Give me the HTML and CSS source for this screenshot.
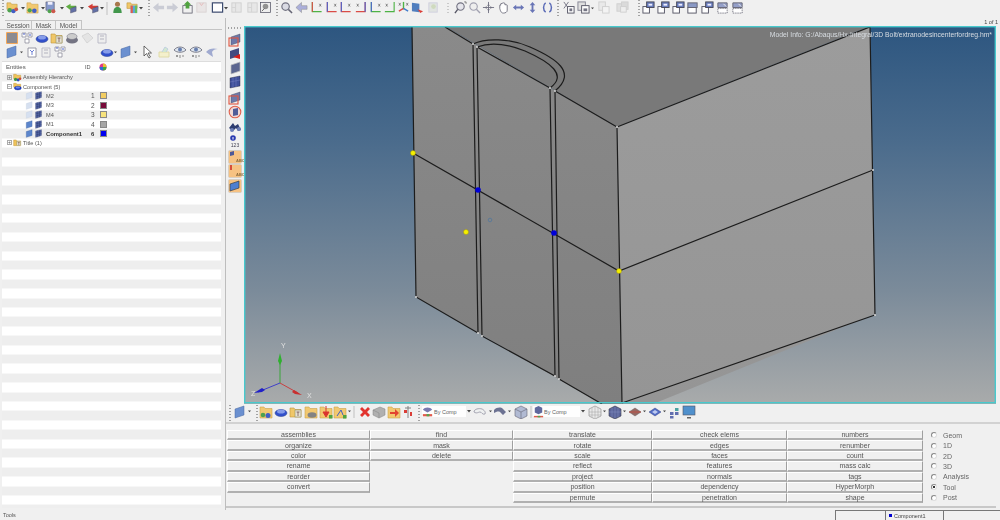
FILE: index.html
```html
<!DOCTYPE html>
<html lang="en">
<head>
<meta charset="utf-8">
<title>HyperMesh</title>
<link rel="stylesheet" href="styles.css">
</head>
<body>
<svg class="sprites" width="0" height="0" aria-hidden="true">
  <defs>
    <symbol id="dd" viewBox="0 0 4 3"><path d="M0 0h4L2 2.5z" fill="#333"/></symbol>
    <symbol id="dots" viewBox="0 0 2 16"><path d="M1 0v16" stroke="#444" stroke-width="1" stroke-dasharray="1 2"/></symbol>
    <symbol id="asm" viewBox="0 0 14 14"><path d="M1 2h4l1 1.500h6V9H1z" fill="#f0c35a" stroke="#b88a2a" stroke-width=".6"/><circle cx="4" cy="10" r="2.500" fill="#3d9a3d"/><circle cx="8" cy="11" r="2.300" fill="#2f4fc0"/><circle cx="11" cy="9" r="2" fill="#c9483a"/></symbol>
    <symbol id="compf" viewBox="0 0 14 14"><path d="M1 2h4l1 1.500h6V8H1z" fill="#f0c35a" stroke="#b88a2a" stroke-width=".6"/><ellipse cx="7.500" cy="9.500" rx="5.500" ry="3" fill="#1f3fc8" stroke="#122a80" stroke-width=".5"/><ellipse cx="7.500" cy="8.500" rx="3.500" ry="1.600" fill="#6d88e8"/></symbol>
    <symbol id="titlef" viewBox="0 0 14 14"><path d="M1 3h4l1 1.500h6V12H1z" fill="#f0c35a" stroke="#b88a2a" stroke-width=".6"/><rect x="6" y="5" width="6" height="7" fill="#e6e0d0" stroke="#885" stroke-width=".6"/><path d="M7.500 7h3M9 7v4" stroke="#644" stroke-width=".8"/></symbol>
    <symbol id="save" viewBox="0 0 14 14"><path d="M1 1h9v9H1z" fill="#7a8fc8" stroke="#445" stroke-width=".6"/><path d="M3 1h5v3H3z" fill="#eef"/><circle cx="5" cy="11" r="2.200" fill="#3d9a3d"/><circle cx="9" cy="11" r="2.200" fill="#c9483a"/></symbol>
    <symbol id="garrow" viewBox="0 0 14 14"><path d="M1 6l5-3v2h6v3H6v2z" fill="#4fa52f"/><path d="M6 8l6-2v5l-6 2z" fill="#54629e" stroke="#334" stroke-width=".4"/></symbol>
    <symbol id="rarrow" viewBox="0 0 14 14"><path d="M1 6l5-3v2h6v3H6v2z" fill="#d02a22"/><path d="M6 8l6-2v5l-6 2z" fill="#54629e" stroke="#334" stroke-width=".4"/></symbol>
    <symbol id="person" viewBox="0 0 14 14"><circle cx="7" cy="3.500" r="2.700" fill="#a06a3a"/><path d="M2.500 13c0-5 2-6.500 4.500-6.500S11.500 8 11.500 13z" fill="#2f8d3a"/></symbol>
    <symbol id="rainbow" viewBox="0 0 14 14"><path d="M1 2h4l1 1.500h6V8H1z" fill="#f0c35a" stroke="#b88a2a" stroke-width=".6"/><path d="M5 5h7v8H5z" fill="#4aa0d8"/><path d="M5 5h2.300v8H5z" fill="#e04a3a"/><path d="M9.600 5H12v8H9.600z" fill="#58b84a"/></symbol>
    <symbol id="gleft" viewBox="0 0 14 14"><path d="M1 7l6-5v3h6v4H7v3z" fill="#c6c8d2"/></symbol>
    <symbol id="gright" viewBox="0 0 14 14"><path d="M13 7L7 2v3H1v4h6v3z" fill="#c6c8d2"/></symbol>
    <symbol id="mleft" viewBox="0 0 14 14"><path d="M1 7l6-5.500v3.500h6v4H7v3.500z" fill="#a4a8d8" stroke="#777" stroke-width=".5"/></symbol>
    <symbol id="gup" viewBox="0 0 14 14"><rect x="2" y="5" width="10" height="8" fill="#f0f0f0" stroke="#445" stroke-width=".8"/><path d="M7 0l4 4H9v4H5V4H3z" fill="#3f9b2c"/></symbol>
    <symbol id="fade" viewBox="0 0 14 14"><rect x="2" y="2" width="10" height="10" fill="#e6e6e6" stroke="#ccc"/><path d="M6 2v10M2 7h4" stroke="#d0d0d0"/></symbol>
    <symbol id="fadr" viewBox="0 0 14 14"><rect x="2" y="2" width="10" height="10" fill="#e8e4e4" stroke="#d8d0d0"/><path d="M5 2l2 3 2-3" stroke="#e3b5b5" fill="none"/></symbol>
    <symbol id="sq" viewBox="0 0 14 14"><rect x="1.500" y="2" width="11" height="10" fill="#fff" stroke="#2a3a62" stroke-width="1.300"/></symbol>
    <symbol id="gear" viewBox="0 0 14 14"><rect x="1.500" y="1.500" width="11" height="11" fill="#eee" stroke="#445" stroke-width=".8"/><circle cx="7" cy="6" r="3" fill="#888"/><path d="M3 11l3-3" stroke="#555"/></symbol>
    <symbol id="mag" viewBox="0 0 14 14"><circle cx="6" cy="6" r="4" fill="#d7d9e3" stroke="#667" stroke-width="1.300"/><path d="M9 9l4 4" stroke="#556" stroke-width="1.600"/></symbol>
    <symbol id="axa" viewBox="0 0 14 14"><path d="M2.500 1v10.500h10" fill="none" stroke="#3cac32" stroke-width="1.200"/><path d="M2.500 1v10.500" stroke="#d83a34" stroke-width="1.200"/><path d="M10 3l2 3M12 3l-2 3" stroke="#333" stroke-width=".6"/></symbol>
    <symbol id="axb" viewBox="0 0 14 14"><path d="M2.500 1v10.500h10" fill="none" stroke="#d83a34" stroke-width="1.200"/><path d="M2.500 1v10.500" stroke="#3a54c8" stroke-width="1.200"/><path d="M10 3l2 3M12 3l-2 3" stroke="#333" stroke-width=".6"/></symbol>
    <symbol id="axc" viewBox="0 0 14 14"><path d="M12 1v10.500H2" fill="none" stroke="#d83a34" stroke-width="1.200"/><path d="M12 1v10.500" stroke="#3a54c8" stroke-width="1.200"/><path d="M3 3l2 3M5 3l-2 3" stroke="#333" stroke-width=".6"/></symbol>
    <symbol id="axd" viewBox="0 0 14 14"><path d="M2.500 1v10.500h10" fill="none" stroke="#3cac32" stroke-width="1.200"/><path d="M2.500 1v10.500" stroke="#3a54c8" stroke-width="1.200"/><path d="M10 3l2 3M12 3l-2 3" stroke="#333" stroke-width=".6"/></symbol>
    <symbol id="axe" viewBox="0 0 14 14"><path d="M12 1v10.500H2" fill="none" stroke="#3cac32" stroke-width="1.200"/><path d="M3 3l2 3M5 3l-2 3" stroke="#333" stroke-width=".6"/></symbol>
    <symbol id="tri" viewBox="0 0 14 14"><path d="M7 1v8" stroke="#3cac32" stroke-width="1.500"/><path d="M7 8L2 11" stroke="#d83a34" stroke-width="1.500"/><path d="M7 8l5 3" stroke="#2f6fc8" stroke-width="1.500"/><path d="M2 2l2 3M4 2L2 5M10 2l2 3M12 2l-2 3" stroke="#333" stroke-width=".6"/></symbol>
    <symbol id="view" viewBox="0 0 14 14"><path d="M1 2l8 1v9l-8-1z" fill="#3f72b8"/><path d="M7 9l6 2-3 2z" fill="#d82a22"/></symbol>
    <symbol id="fadb" viewBox="0 0 14 14"><rect x="2" y="2" width="9" height="10" fill="#dfe3df" stroke="#ccd"/><circle cx="7" cy="6" r="2.500" fill="#cbd8b8"/></symbol>
    <symbol id="zoom" viewBox="0 0 14 14"><circle cx="7" cy="6" r="4" fill="#e4e4ea" stroke="#667" stroke-width="1.200"/><path d="M4 9l-3 4" stroke="#445" stroke-width="1.500"/><path d="M11 1h2v2" stroke="#333" fill="none" stroke-width=".7"/></symbol>
    <symbol id="zoomf" viewBox="0 0 14 14"><circle cx="6" cy="6" r="4" fill="#eee" stroke="#99a" stroke-width="1.200"/><path d="M9 9l4 4" stroke="#99a" stroke-width="1.500"/></symbol>
    <symbol id="cross" viewBox="0 0 14 14"><path d="M7 1v12M1 7h12" stroke="#667" stroke-width="1"/><path d="M7 3l-1.500 2h3zM7 11l-1.500-2h3zM3 7l2-1.500v3zM11 7l-2-1.500v3z" fill="#667"/></symbol>
    <symbol id="hand" viewBox="0 0 14 14"><path d="M3 8V4.500l1 0V3l1.500-.5L7 2l1.500.5V4l1.500 0 1 .5V10c0 2-2 3-4 3S4 12 3 8z" fill="#fff" stroke="#556" stroke-width=".9"/></symbol>
    <symbol id="lr" viewBox="0 0 14 14"><path d="M1 7l3.500-3v2h5V4L13 7l-3.500 3V8h-5v2z" fill="#5a68b0"/></symbol>
    <symbol id="ud" viewBox="0 0 14 14"><path d="M7 1l3 3.500H8v5h2L7 13l-3-3.500h2v-5H4z" fill="#5a68b0"/></symbol>
    <symbol id="rot" viewBox="0 0 14 14"><path d="M5 2C2 4 2 10 5 12M9 2c3 2 3 8 0 10" fill="none" stroke="#4a5cb0" stroke-width="1.600"/></symbol>
    <symbol id="cut" viewBox="0 0 14 14"><path d="M2 1l5 7M7 1L2 8" stroke="#667" stroke-width="1"/><rect x="6" y="6" width="7" height="7" fill="#fff" stroke="#445"/><rect x="8" y="8" width="3" height="3" fill="#667"/></symbol>
    <symbol id="copy" viewBox="0 0 14 14"><rect x="1" y="1" width="8" height="9" fill="#ddd" stroke="#778"/><rect x="5" y="5" width="8" height="8" fill="#fff" stroke="#445"/><rect x="7" y="8" width="4" height="3" fill="#667"/></symbol>
    <symbol id="copyf" viewBox="0 0 14 14"><rect x="2" y="1" width="7" height="9" fill="#e8e8e8" stroke="#ccc"/><rect x="6" y="6" width="7" height="7" fill="#f3f3f3" stroke="#ccc"/></symbol>
    <symbol id="copyg" viewBox="0 0 14 14"><rect x="1" y="3" width="7" height="8" fill="#ddd" stroke="#ccc"/><rect x="6" y="1" width="7" height="8" fill="#d8d8d8" stroke="#ccc"/><rect x="5" y="6" width="6" height="6" fill="#eee" stroke="#ccc"/></symbol>
    <symbol id="win" viewBox="0 0 14 14"><rect x="1" y="6" width="7" height="7" fill="#fff" stroke="#445"/><rect x="5" y="1" width="8" height="6" fill="#5a70b8" stroke="#334"/><rect x="7" y="3" width="4" height="2" fill="#eef"/></symbol>
    <symbol id="wing" viewBox="0 0 14 14"><rect x="2" y="7" width="9" height="6" fill="#fff" stroke="#445"/><rect x="2" y="2" width="10" height="5" fill="#7f8fc0" stroke="#556"/></symbol>
    <symbol id="wint" viewBox="0 0 14 14"><rect x="2" y="8" width="10" height="5" fill="#fff" stroke="#445" stroke-dasharray="1 1"/><path d="M2 2h10v5H2z" fill="#8a96c4" stroke="#556"/><path d="M8 3l3 3" stroke="#eee"/></symbol>
    <symbol id="shade" viewBox="0 0 14 14"><rect x="1" y="1" width="12" height="12" fill="#f5a04a" rx="1"/><rect x="2" y="2" width="10" height="10" fill="#808088"/></symbol>
    <symbol id="mesh" viewBox="0 0 14 14"><path d="M1 3l9-2v9l-9 3z" fill="#5668a8" stroke="#2a3566" stroke-width=".5"/><path d="M4 2.500v10M7 1.800v9.600M1 6l9-2M1 9.500l9-2.500" stroke="#22305c" stroke-width=".5"/></symbol>
    <symbol id="plane" viewBox="0 0 14 14"><path d="M2 4l9-3v9l-9 3z" fill="#5c86cc" stroke="#3a5a98" stroke-width=".5"/></symbol>
    <symbol id="planef" viewBox="0 0 14 14"><path d="M2 4l9-3v9l-9 3z" fill="#d6e0f0" stroke="#c2cee0" stroke-width=".5"/></symbol>
    <symbol id="disc" viewBox="0 0 14 14"><ellipse cx="7" cy="8" rx="6" ry="3.500" fill="#1d3fc8" stroke="#102a80" stroke-width=".5"/><ellipse cx="7" cy="6.500" rx="4" ry="2" fill="#7a93e8"/></symbol>
    <symbol id="disk" viewBox="0 0 14 14"><ellipse cx="7" cy="9" rx="6" ry="3.500" fill="#667"/><ellipse cx="7" cy="5.500" rx="5" ry="3" fill="#c8c8c8" stroke="#667" stroke-width=".6"/></symbol>
    <symbol id="diskf" viewBox="0 0 14 14"><path d="M2 5l6-3 5 5-6 5z" fill="#e3e3e3" stroke="#d2d2d2"/></symbol>
    <symbol id="tree2" viewBox="0 0 14 14"><path d="M3 3h8v9H3z" fill="#fff" stroke="#778" stroke-width=".8"/><path d="M5 5l2 2M9 5l-2 2M7 7v3" stroke="#3a54c8" stroke-width=".8"/></symbol>
    <symbol id="tree3" viewBox="0 0 14 14"><path d="M3 3h8v9H3z" fill="#eee" stroke="#aab" stroke-width=".8"/><path d="M5 5h4M5 8h4" stroke="#99a" stroke-width=".8"/></symbol>
    <symbol id="tree4" viewBox="0 0 14 14"><path d="M2 2h4v4H2zM8 2h4v4H8zM5 8h4v4H5z" fill="#fff" stroke="#778" stroke-width=".7"/><path d="M3 3h2M9 4h2" stroke="#3a54c8"/></symbol>
    <symbol id="cursor" viewBox="0 0 14 14"><path d="M4 1v10l2.500-2.500L9 13l1.500-1L8 8h3.500z" fill="#fff" stroke="#333" stroke-width=".8"/></symbol>
    <symbol id="erase" viewBox="0 0 14 14"><path d="M2 7h10v5H2z" fill="#f4f0c8" stroke="#ddd8a0"/><path d="M5 7l3-5 3 2-2 3" fill="#cfe8cf" stroke="#bcd"/></symbol>
    <symbol id="eye" viewBox="0 0 14 14"><path d="M1 5c3-4 9-4 12 0-3 3-9 3-12 0z" fill="#dce4ee" stroke="#556" stroke-width=".8"/><circle cx="7" cy="4.500" r="2" fill="#5a74a8"/><path d="M3 11h2M4 10v2M7 10v3M9 11h2" stroke="#333" stroke-width=".6"/></symbol>
    <symbol id="undo" viewBox="0 0 14 14"><path d="M1 7c3-4 8-4 12-3-3 0-5 1-6 3l1 5-3-2z" fill="#97a2cc"/></symbol>
    <symbol id="redbox" viewBox="0 0 14 14"><path d="M3 4l9-3v8l-9 3z" fill="#6c78a8" stroke="#445" stroke-width=".4"/><rect x="1" y="5" width="9" height="8" fill="none" stroke="#e0553f" stroke-width="1.100"/></symbol>
    <symbol id="redarr" viewBox="0 0 14 14"><path d="M2 4l9-3v8l-9 3z" fill="#444a80"/><path d="M5 10l7-3v5z" fill="#d8201a"/></symbol>
    <symbol id="gplane" viewBox="0 0 14 14"><path d="M3 4l9-3v9l-9 3z" fill="#5c6690" stroke="#bbb" stroke-width=".7"/></symbol>
    <symbol id="bplane" viewBox="0 0 14 14"><path d="M2 3l10-2v10L2 13z" fill="#3f4f9a" stroke="#223" stroke-width=".4"/><path d="M5 2.500v10M8 2v10M2 7l10-2" stroke="#7480c0" stroke-width=".5"/></symbol>
    <symbol id="ring" viewBox="0 0 14 14"><circle cx="7" cy="7" r="5.800" fill="#f0d8d4" stroke="#e0604c" stroke-width="1.100"/><path d="M5 4l5-1v7l-5 1z" fill="#505c98"/></symbol>
    <symbol id="bino" viewBox="0 0 14 14"><path d="M1 8l4-5 2 3 3-2 3 6-3 1-2-3-3 3z" fill="#2c3c70"/><circle cx="4" cy="10" r="2" fill="#6e80b8"/><circle cx="11" cy="9" r="2" fill="#6e80b8"/></symbol>
    <symbol id="tanabc" viewBox="0 0 14 14"><rect x=".5" y=".5" width="13" height="13" rx="1" fill="#f6c283" stroke="#c9c9c9" stroke-width=".6"/><path d="M2 2l4-1v4l-4 1z" fill="#4c5898"/></symbol>
    <symbol id="tanred" viewBox="0 0 14 14"><rect x=".5" y=".5" width="13" height="13" rx="1" fill="#f6c283" stroke="#c9c9c9" stroke-width=".6"/><path d="M3 1v5" stroke="#c81e1e" stroke-width="1.400"/></symbol>
    <symbol id="tanpl" viewBox="0 0 14 14"><rect x=".5" y=".5" width="13" height="13" rx="1" fill="#f6c283" stroke="#c9c9c9" stroke-width=".6"/><path d="M2 5l9-3v7l-9 3z" fill="#4f7fd0" stroke="#333" stroke-width=".6"/></symbol>
    <symbol id="bfolder" viewBox="0 0 14 14"><path d="M1 2h4l1 1.500h7V13H1z" fill="#f2c462" stroke="#c89a3a" stroke-width=".6"/><circle cx="4" cy="10" r="2.300" fill="#3d9a3d"/><circle cx="9" cy="10.500" r="2.500" fill="#2f4fc0"/></symbol>
    <symbol id="bgear" viewBox="0 0 14 14"><path d="M1 2h4l1 1.500h7V13H1z" fill="#f2c462" stroke="#c89a3a" stroke-width=".6"/><ellipse cx="8" cy="10" rx="4.500" ry="2.800" fill="#777"/></symbol>
    <symbol id="bred" viewBox="0 0 14 14"><path d="M1 2h4l1 1.500h7V13H1z" fill="#f2c462" stroke="#c89a3a" stroke-width=".6"/><path d="M7 1v8M4 7l3 5 3-5z" fill="#d8201a" stroke="#d8201a"/><rect x="10" y="10" width="3.500" height="3.500" fill="#3f9b2c"/></symbol>
    <symbol id="byel" viewBox="0 0 14 14"><path d="M1 2h4l1 1.500h7V13H1z" fill="#f2c462" stroke="#c89a3a" stroke-width=".6"/><path d="M4 11l4-6 2 5" stroke="#2f4fc0" fill="none"/><rect x="10" y="10" width="3.500" height="3.500" fill="#3f9b2c"/></symbol>
    <symbol id="x" viewBox="0 0 14 14"><path d="M2 4l2-2 3 3 3-3 2 2-3 3 3 3-2 2-3-3-3 3-2-2 3-3z" fill="#e0201a"/></symbol>
    <symbol id="block" viewBox="0 0 14 14"><path d="M1 5l7-3 5 2v6l-6 3-6-3z" fill="#a9a9a9" stroke="#777" stroke-width=".5"/><path d="M1 5l6 3v5" stroke="#777" fill="none" stroke-width=".5"/></symbol>
    <symbol id="bredr" viewBox="0 0 14 14"><path d="M1 2h4l1 1.500h7V13H1z" fill="#f2c462" stroke="#c89a3a" stroke-width=".6"/><path d="M3 7h5V4l4 4-4 4V9H3z" fill="#e0301a"/></symbol>
    <symbol id="tool" viewBox="0 0 14 14"><path d="M7 1v12M4 3h6" stroke="#777"/><path d="M3 5h3v3H3z" fill="#d82a22"/><path d="M9 7h2v4H9z" fill="#d82a22"/></symbol>
    <symbol id="combo1" viewBox="0 0 14 14"><path d="M2 5c2-3 8-3 10 0l-5 3z" fill="#6c6ca8"/><path d="M2 11h10" stroke="#e04a3a" stroke-width="2.400"/><path d="M6 11h3" stroke="#3fa03f" stroke-width="2.400"/></symbol>
    <symbol id="loop" viewBox="0 0 14 14"><path d="M1 7c0-3 5-4 8-3 2 1 4 3 3 5-3 1-3-2-5-2-2 0-3 2-6 0z" fill="#eef0f0" stroke="#889" stroke-width=".8"/></symbol>
    <symbol id="wave" viewBox="0 0 14 14"><path d="M1 5c3-3 7-3 9-1l3 3-3 3-3-3C5 6 3 7 1 8z" fill="#5e6488"/></symbol>
    <symbol id="cube" viewBox="0 0 14 14"><path d="M1 4l6-3 6 3v7l-6 3-6-3z" fill="#aab4d0" stroke="#556" stroke-width=".6"/><path d="M1 4l6 3 6-3M7 7v7" stroke="#556" fill="none" stroke-width=".6"/></symbol>
    <symbol id="combo2" viewBox="0 0 14 14"><path d="M3 3l4-2 4 2v5l-4 2-4-2z" fill="#4f5994"/><path d="M2 12.500h10" stroke="#e04a3a" stroke-width="1.600"/><path d="M6 12.500h3" stroke="#3fa03f" stroke-width="1.600"/></symbol>
    <symbol id="meshc" viewBox="0 0 14 14"><path d="M1 4l6-3 6 3v7l-6 3-6-3z" fill="#e8e8e8" stroke="#888" stroke-width=".7"/><path d="M4 3v9M7 2v11M10 3v9M1 7l12 0M1 10h12" stroke="#999" stroke-width=".5"/></symbol>
    <symbol id="solid" viewBox="0 0 14 14"><path d="M1 4l6-3 6 3v7l-6 3-6-3z" fill="#4a5490" stroke="#223" stroke-width=".6"/><path d="M4 3v9M7 2v11M10 3v9M1 7h12" stroke="#7a84bc" stroke-width=".5"/></symbol>
    <symbol id="flat" viewBox="0 0 14 14"><path d="M1 7l6-4 6 4-6 4z" fill="#8c5a54" stroke="#555" stroke-width=".5"/><path d="M1 7h12" stroke="#c0392b" stroke-width=".8"/></symbol>
    <symbol id="dia" viewBox="0 0 14 14"><path d="M1 7l6-4 6 4-6 4z" fill="#3f5cc0" stroke="#24327a" stroke-width=".5"/><path d="M4 7l3-2 3 2-3 2z" fill="#b8c6f0"/></symbol>
    <symbol id="nodes" viewBox="0 0 14 14"><rect x="2" y="7" width="3.500" height="3" fill="#5060a8"/><rect x="2" y="11" width="3.500" height="2.500" fill="#5060a8"/><rect x="7" y="3" width="3.500" height="3" fill="#3a9a9a"/><rect x="7" y="7" width="3.500" height="3" fill="#5060a8"/></symbol>
    <symbol id="monitor" viewBox="0 0 14 14"><rect x="1" y="1" width="12" height="9" fill="#3f86c8" stroke="#445" stroke-width=".6"/><path d="M5 12h4v1.500H5z" fill="#555"/></symbol>
  </defs>
</svg>

<div class="app">
  <header class="topbar">
    <svg class="strip" width="1000" height="18" viewBox="0 0 1000 18" aria-hidden="true">
      <use href="#dots" x="2" y="0" width="2" height="16"/>
      <use href="#asm" x="6" y="1" width="13" height="13"/><use href="#dd" x="21" y="7" width="4" height="3"/>
      <use href="#bfolder" x="26" y="1" width="13" height="13"/><use href="#dd" x="41" y="7" width="4" height="3"/>
      <use href="#save" x="45" y="1" width="13" height="13"/><use href="#dd" x="60" y="7" width="4" height="3"/>
      <use href="#garrow" x="65" y="1" width="13" height="13"/><use href="#dd" x="80" y="7" width="4" height="3"/>
      <use href="#rarrow" x="87" y="1" width="13" height="13"/><use href="#dd" x="100" y="7" width="4" height="3"/>
      <path d="M107 2v13" stroke="#bbb"/>
      <use href="#person" x="111" y="1" width="13" height="13"/>
      <use href="#rainbow" x="126" y="1" width="13" height="13"/><use href="#dd" x="139" y="7" width="4" height="3"/>
      <use href="#dots" x="148" y="0" width="2" height="16"/>
      <use href="#gleft" x="152" y="1" width="13" height="13"/><use href="#gright" x="166" y="1" width="13" height="13"/>
      <use href="#gup" x="181" y="1" width="13" height="13"/><use href="#fadr" x="195" y="1" width="13" height="13"/>
      <use href="#sq" x="211" y="1" width="13" height="13"/><use href="#dd" x="224" y="7" width="4" height="3"/>
      <use href="#fade" x="230" y="1" width="13" height="13"/><use href="#fade" x="246" y="1" width="13" height="13"/>
      <use href="#gear" x="259" y="1" width="13" height="13"/>
      <use href="#dots" x="276" y="0" width="2" height="16"/>
      <use href="#mag" x="280" y="1" width="13" height="13"/><use href="#mleft" x="295" y="1" width="13" height="13"/>
      <use href="#axa" x="310" y="1" width="13" height="13"/><use href="#axb" x="325" y="1" width="13" height="13"/>
      <use href="#axb" x="339" y="1" width="13" height="13"/><use href="#axc" x="354" y="1" width="13" height="13"/>
      <use href="#axd" x="369" y="1" width="13" height="13"/><use href="#axe" x="383" y="1" width="13" height="13"/>
      <use href="#tri" x="397" y="1" width="13" height="13"/><use href="#view" x="411" y="1" width="13" height="13"/>
      <use href="#fadb" x="427" y="1" width="13" height="13"/>
      <path d="M448 3v12" stroke="#999" stroke-dasharray="1 2"/>
      <use href="#zoom" x="454" y="1" width="13" height="13"/><use href="#zoomf" x="468" y="1" width="13" height="13"/>
      <use href="#cross" x="482" y="1" width="13" height="13"/><use href="#hand" x="497" y="1" width="13" height="13"/>
      <use href="#lr" x="512" y="1" width="13" height="13"/><use href="#ud" x="526" y="1" width="13" height="13"/>
      <use href="#rot" x="541" y="1" width="13" height="13"/>
      <use href="#dots" x="557" y="0" width="2" height="16"/>
      <use href="#cut" x="562" y="1" width="13" height="13"/><use href="#copy" x="577" y="1" width="13" height="13"/><use href="#dd" x="591" y="7" width="3" height="3"/>
      <use href="#copyf" x="597" y="1" width="13" height="13"/><use href="#copyg" x="616" y="1" width="13" height="13"/>
      <use href="#dots" x="638" y="0" width="2" height="16"/>
      <use href="#win" x="642" y="1" width="13" height="13"/><use href="#win" x="657" y="1" width="13" height="13"/>
      <use href="#win" x="672" y="1" width="13" height="13"/><use href="#wing" x="686" y="1" width="13" height="13"/>
      <use href="#win" x="701" y="1" width="13" height="13"/><use href="#wint" x="716" y="1" width="13" height="13"/>
      <use href="#wint" x="731" y="1" width="13" height="13"/>
    </svg>
  </header>

  <div class="main">
    <aside class="left">
      <nav class="tabs">
        <span class="tab tab-s">Session</span>
        <span class="tab tab-a">Mask</span>
        <span class="tab tab-m">Model</span>
      </nav>
      <svg class="strip" width="222" height="30" viewBox="0 0 222 30" aria-hidden="true">
        <use href="#shade" x="5" y="1" width="14" height="14"/><use href="#tree4" x="20" y="1" width="14" height="14"/>
        <use href="#disc" x="35" y="1" width="14" height="14"/><use href="#titlef" x="50" y="1" width="14" height="14"/>
        <use href="#disk" x="65" y="1" width="14" height="14"/><use href="#diskf" x="80" y="1" width="14" height="14"/>
        <use href="#tree3" x="95" y="1" width="14" height="14"/>
        <use href="#plane" x="5" y="15" width="14" height="14"/><use href="#dd" x="20" y="21" width="3" height="3"/>
        <use href="#tree2" x="25" y="15" width="14" height="14"/><use href="#tree3" x="39" y="15" width="14" height="14"/>
        <use href="#tree4" x="53" y="15" width="14" height="14"/>
        <use href="#disc" x="100" y="15" width="14" height="14"/><use href="#dd" x="114" y="21" width="3" height="3"/>
        <use href="#plane" x="119" y="15" width="14" height="14"/><use href="#dd" x="134" y="21" width="3" height="3"/>
        <use href="#cursor" x="140" y="15" width="14" height="14"/><use href="#erase" x="157" y="15" width="14" height="14"/>
        <use href="#eye" x="173" y="15" width="14" height="14"/><use href="#eye" x="189" y="15" width="14" height="14"/>
        <use href="#undo" x="205" y="15" width="14" height="14"/>
      </svg>
      <section class="tree">
        <div class="thead"><span class="tname">Entities</span><span class="tid">ID</span>
          <svg class="wheel" width="8" height="8" viewBox="0 0 8 8" aria-hidden="true"><circle cx="4" cy="4" r="3.500" fill="#e03a8a"/><path d="M4 4V.5A3.500 3.500 0 0 1 7.500 4z" fill="#e8c030"/><path d="M4 4h3.500A3.500 3.500 0 0 1 4 7.500z" fill="#3aa84a"/><path d="M4 4v3.500A3.500 3.500 0 0 1 .5 4z" fill="#2f6fd8"/></svg>
        </div>
        <div class="row"><i class="exp">+</i><svg class="ic" viewBox="0 0 14 14"><use href="#asm"/></svg><span class="tname">Assembly Hierarchy</span></div>
        <div class="row"><i class="exp">−</i><svg class="ic" viewBox="0 0 14 14"><use href="#compf"/></svg><span class="tname">Component (5)</span></div>
        <div class="row child"><svg class="ic" viewBox="0 0 14 14"><use href="#planef"/></svg><svg class="ic" viewBox="0 0 14 14"><use href="#mesh"/></svg><span class="tname">M2</span><span class="tid">1</span><i class="sw sw-a"></i></div>
        <div class="row child"><svg class="ic" viewBox="0 0 14 14"><use href="#planef"/></svg><svg class="ic" viewBox="0 0 14 14"><use href="#mesh"/></svg><span class="tname">M3</span><span class="tid">2</span><i class="sw sw-b"></i></div>
        <div class="row child"><svg class="ic" viewBox="0 0 14 14"><use href="#planef"/></svg><svg class="ic" viewBox="0 0 14 14"><use href="#mesh"/></svg><span class="tname">M4</span><span class="tid">3</span><i class="sw sw-c"></i></div>
        <div class="row child"><svg class="ic" viewBox="0 0 14 14"><use href="#plane"/></svg><svg class="ic" viewBox="0 0 14 14"><use href="#mesh"/></svg><span class="tname">M1</span><span class="tid">4</span><i class="sw sw-d"></i></div>
        <div class="row child strong"><svg class="ic" viewBox="0 0 14 14"><use href="#plane"/></svg><svg class="ic" viewBox="0 0 14 14"><use href="#mesh"/></svg><span class="tname">Component1</span><span class="tid">6</span><i class="sw sw-e"></i></div>
        <div class="row"><i class="exp">+</i><svg class="ic" viewBox="0 0 14 14"><use href="#titlef"/></svg><span class="tname">Title (1)</span></div>
      </section>
    </aside>

    <div class="right">
      <div class="pagebar">1 of 1</div>
      <div class="stage">
        <svg class="rail" width="18" height="378" viewBox="226 26 18 378" aria-hidden="true">
          <path d="M228 28h14" stroke="#555" stroke-dasharray="1 2"/>
          <use href="#redbox" x="228" y="33" width="14" height="14"/>
          <use href="#redarr" x="228" y="47" width="14" height="14"/>
          <use href="#gplane" x="228" y="61" width="14" height="14"/>
          <use href="#bplane" x="228" y="75" width="14" height="14"/>
          <use href="#redbox" x="228" y="91" width="14" height="14"/>
          <use href="#ring" x="228" y="105" width="14" height="14"/>
          <use href="#bino" x="228" y="120" width="14" height="14"/>
          <circle cx="233" cy="138" r="2.800" fill="#2a3ab0"/><path d="M233 137v2.500" stroke="#fff"/>
          <text x="235" y="147" class="railnum">123</text>
          <use href="#tanabc" x="228" y="150" width="14" height="14"/><text x="236" y="162" class="abc">ABC</text>
          <use href="#tanred" x="228" y="164" width="14" height="14"/><text x="236" y="176" class="abc">ABC</text>
          <use href="#tanpl" x="228" y="179" width="14" height="14"/>
        </svg>
        <div class="view">
          <svg class="scene" width="752" height="378" viewBox="244 26 752 378" aria-hidden="true">
            <defs>
              <linearGradient id="lf" x1="0" y1="0" x2="0" y2="1"><stop offset="0" stop-color="#8a8a8a"/><stop offset="1" stop-color="#7f7f7f"/></linearGradient>
              <linearGradient id="rf" x1="0" y1="0" x2="0" y2="1"><stop offset="0" stop-color="#9c9c9c"/><stop offset="1" stop-color="#959595"/></linearGradient>
            </defs>
            <polygon points="412,26 445,26 617,127 622,404 602,404 416,297" fill="url(#lf)"/>
            <polygon points="445,26 870,26 617,127" fill="#797979"/>
            <polygon points="617,127 870,26 875,314 653,404 622,404" fill="url(#rf)"/>
            <g class="edge">
              <path d="M412,27L416,297L478,333M482,336L555,376M559,379L602,404"/>
              <path d="M445,27L473,44M477,47L550,88M555,91L617,127"/>
              <path d="M617,127L622,403M617,127L870,27L875,315M622,403L875,315" />
              <path d="M413,153L619,271L873,170"/>
              <path d="M473,44L478,333M477,47L482,336M550,88L555,376M555,91L559,379"/>
              <path d="M473,44C485,38 510,38 530,47C555,58 578,72 555,91"/>
              <path d="M477,47C490,42 505,43 525,51C550,62 568,75 550,88"/>
            </g>
            <g fill="#ddd">
              <circle cx="473" cy="44" r="1"/><circle cx="477" cy="47" r="1"/><circle cx="550" cy="88" r="1"/><circle cx="555" cy="91" r="1"/>
              <circle cx="617" cy="127" r="1"/><circle cx="416" cy="297" r="1"/><circle cx="478" cy="333" r="1"/><circle cx="482" cy="336" r="1"/>
              <circle cx="555" cy="376" r="1"/><circle cx="559" cy="379" r="1"/><circle cx="873" cy="170" r="1"/><circle cx="875" cy="315" r="1"/>
            </g>
            <g fill="#f4f000" stroke="#998800" stroke-width=".4">
              <circle cx="413" cy="153" r="2.500"/><circle cx="466" cy="232" r="2.500"/><circle cx="619" cy="271" r="2.500"/>
            </g>
            <g fill="#0000d8"><circle cx="478" cy="190" r="2.800"/><circle cx="554" cy="233" r="2.800"/></g>
            <circle cx="490" cy="220" r="1.800" fill="none" stroke="#5c7a98"/>
            <path d="M280 383V357" stroke="#3aa53a" stroke-width="1"/><path d="M280 353l-2 8 2 4 2-4z" fill="#2fb02f"/>
            <path d="M280 383L258 392" stroke="#4040c8"/><path d="M254 393l8-5 3 2-3 2z" fill="#2020c8"/>
            <path d="M280 383L298 393" stroke="#c84040"/><path d="M302 395l-8-5-2 2 3 2z" fill="#c83030"/>
            <text x="281" y="348" class="ax">Y</text><text x="251" y="396" class="ax">Z</text><text x="307" y="398" class="ax">X</text>
            <rect x="244.700" y="26.700" width="750.600" height="376" fill="none" stroke="#48c9cd" stroke-width="1.400"/>
          </svg>
          <span class="info">Model Info: G:/Abaqus/Hx-Integral/3D Bolt/extranodesincenterfordreg.hm*</span>
        </div>
      </div>
      <div class="tools">
        <svg class="strip" width="774" height="18" viewBox="226 404 774 18" aria-hidden="true">
          <use href="#dots" x="229" y="405" width="2" height="16"/>
          <use href="#plane" x="233" y="405" width="14" height="14"/><use href="#dd" x="248" y="410" width="3" height="3"/>
          <use href="#dots" x="256" y="405" width="2" height="16"/>
          <use href="#bfolder" x="259" y="405" width="14" height="14"/><use href="#disc" x="274" y="405" width="14" height="14"/>
          <use href="#titlef" x="289" y="405" width="14" height="14"/><use href="#bgear" x="304" y="405" width="14" height="14"/>
          <use href="#bred" x="319" y="405" width="14" height="14"/><use href="#byel" x="333" y="405" width="14" height="14"/><use href="#dd" x="348" y="410" width="3" height="3"/>
          <path d="M354 406v12" stroke="#bbb"/>
          <use href="#x" x="358" y="405" width="14" height="14"/><use href="#block" x="372" y="405" width="14" height="14"/>
          <use href="#bredr" x="387" y="405" width="14" height="14"/><use href="#tool" x="401" y="405" width="14" height="14"/>
          <use href="#dots" x="418" y="405" width="2" height="16"/>
          <rect x="422" y="406" width="44" height="11" fill="#fff"/>
          <use href="#combo1" x="421" y="405" width="13" height="13"/>
          <text x="434" y="414" class="combo">By Comp</text><use href="#dd" x="467" y="410" width="4" height="3"/>
          <use href="#loop" x="473" y="405" width="14" height="14"/><use href="#dd" x="489" y="410" width="3" height="3"/>
          <use href="#wave" x="493" y="405" width="14" height="14"/><use href="#dd" x="508" y="410" width="3" height="3"/>
          <use href="#cube" x="514" y="405" width="14" height="14"/>
          <path d="M531 406v12" stroke="#bbb"/>
          <rect x="533" y="406" width="47" height="11" fill="#fff"/>
          <use href="#combo2" x="532" y="405" width="13" height="13"/>
          <text x="544" y="414" class="combo">By Comp</text><use href="#dd" x="581" y="410" width="4" height="3"/>
          <use href="#meshc" x="588" y="405" width="14" height="14"/><use href="#dd" x="603" y="410" width="3" height="3"/>
          <use href="#solid" x="608" y="405" width="14" height="14"/><use href="#dd" x="623" y="410" width="3" height="3"/>
          <use href="#flat" x="628" y="405" width="14" height="14"/><use href="#dd" x="643" y="410" width="3" height="3"/>
          <use href="#dia" x="648" y="405" width="14" height="14"/><use href="#dd" x="663" y="410" width="3" height="3"/>
          <use href="#nodes" x="668" y="405" width="14" height="14"/><use href="#monitor" x="682" y="405" width="14" height="14"/>
        </svg>
      </div>
      <section class="panel">
        <div class="col c1">
          <button class="btn">assemblies</button><button class="btn">organize</button><button class="btn">color</button><button class="btn">rename</button><button class="btn">reorder</button><button class="btn">convert</button>
        </div>
        <div class="col c2">
          <button class="btn">find</button><button class="btn">mask</button><button class="btn">delete</button>
        </div>
        <div class="col c3">
          <button class="btn">translate</button><button class="btn">rotate</button><button class="btn">scale</button><button class="btn">reflect</button><button class="btn">project</button><button class="btn">position</button><button class="btn">permute</button>
        </div>
        <div class="col c4">
          <button class="btn">check elems</button><button class="btn">edges</button><button class="btn">faces</button><button class="btn">features</button><button class="btn">normals</button><button class="btn">dependency</button><button class="btn">penetration</button>
        </div>
        <div class="col c5">
          <button class="btn">numbers</button><button class="btn">renumber</button><button class="btn">count</button><button class="btn">mass calc</button><button class="btn">tags</button><button class="btn">HyperMorph</button><button class="btn">shape</button>
        </div>
        <div class="col radios">
          <label class="radio"><i class="dot"></i>Geom</label>
          <label class="radio"><i class="dot"></i>1D</label>
          <label class="radio"><i class="dot"></i>2D</label>
          <label class="radio"><i class="dot"></i>3D</label>
          <label class="radio"><i class="dot"></i>Analysis</label>
          <label class="radio"><i class="dot on"></i>Tool</label>
          <label class="radio"><i class="dot"></i>Post</label>
        </div>
      </section>
    </div>
  </div>

  <footer class="status">
    <span class="msg">Tools</span>
    <span class="cell c-a"></span>
    <span class="cell c-b"><i class="mini"></i>Component1</span>
    <span class="cell c-c"></span>
  </footer>
</div>
</body>
</html>
```
FILE: styles.css
```css
* { box-sizing: border-box; }
html, body { margin: 0; padding: 0; }
body {
  width: 1000px;
  height: 520px;
  overflow: hidden;
  background: #f0f0f0;
  font-family: "Liberation Sans", Arial, sans-serif;
  color: #444;
}
.sprites { position: absolute; }
.app {
  width: 1000px;
  height: 520px;
  display: flex;
  flex-direction: column;
  filter: blur(0.4px);
}
.strip { display: block; opacity: 0.9; }

.topbar { height: 18px; flex: none; }
.main { height: 492px; flex: none; display: flex; }

/* left browser */
.left {
  width: 222px;
  flex: none;
  display: flex;
  flex-direction: column;
  padding-top: 2px;
}
.tabs {
  height: 10px;
  padding-left: 5px;
  display: flex;
  flex: none;
  border-bottom: 1px solid #c4c4c4;
}
.tab {
  font-size: 6.5px;
  line-height: 10px;
  color: #555;
  border: 1px solid #c4c4c4;
  border-width: 1px 1px 0 0;
  text-align: center;
}
.tab-s { width: 27px; }
.tab-a { width: 24px; }
.tab-m { width: 26px; }
.tree {
  flex: 1;
  margin: 1px 0 2px 2px;
  width: 219px;
  background: repeating-linear-gradient(#eeeeee 0, #eeeeee 9.4px, #fff 9.4px, #fff 18.8px);
  background-position: 0 10.5px;
  background-color: #fff;
  border-top: 1px solid #ddd;
}
.thead {
  height: 10.5px;
  display: flex;
  align-items: center;
  background: #fff;
  padding-left: 4px;
}
.thead .tname { width: 79px; font-size: 6px; }
.tname { font-size: 5.6px; color: #555; white-space: nowrap; }
.tid { font-size: 5.6px; color: #555; }
.wheel { margin-left: 8px; }
.row {
  height: 9.4px;
  display: flex;
  align-items: center;
  padding-left: 5px;
}
.exp {
  width: 5px;
  height: 5px;
  border: 1px solid #aaa;
  font-style: normal;
  font-size: 5px;
  line-height: 3px;
  text-align: center;
  margin-right: 1px;
  color: #555;
}
.ic { width: 9px; height: 9px; flex: none; margin-right: 1px; }
.child { padding-left: 23px; }
.child .tname { margin-left: 1px; width: 45px; flex: none; }
.child .tid { width: 9px; font-size: 6.5px; }
.strong .tname, .strong .tid { font-weight: bold; color: #333; font-size: 5.9px; }
.sw { width: 7px; height: 7px; border: 1px solid #888; }
.sw-a { background: #f2cd62; }
.sw-b { background: #780a3a; }
.sw-c { background: #f6e27c; }
.sw-d { background: #a6a6a6; }
.sw-e { background: #0000f0; }

/* right side */
.right {
  width: 775px;
  margin-left: 3px;
  flex: none;
  display: flex;
  flex-direction: column;
  border-left: 1px solid #bdbdbd;
}
.pagebar {
  height: 8px;
  flex: none;
  font-size: 5.5px;
  line-height: 8px;
  text-align: right;
  padding-right: 2px;
  color: #444;
}
.stage { display: flex; height: 378px; flex: none; }
.rail { flex: none; display: block; }
.view {
  position: relative;
  width: 752px;
  height: 378px;
  flex: none;
  background: linear-gradient(#2d5680 0, #4a6b8c 30%, #7b8b9a 70%, #a9abab 100%);
}
.scene { display: block; }
.edge { fill: none; stroke: #1c1c1c; stroke-width: 1.2; }
.info {
  position: absolute;
  top: 5px;
  right: 4px;
  font-size: 6.8px;
  line-height: 8px;
  color: #d8dde2;
  white-space: nowrap;
}
.ax { font: 7px "Liberation Sans", sans-serif; fill: #e0e0e0; }
.railnum { font: 5px "Liberation Sans", sans-serif; fill: #445; text-anchor: middle; }
.abc { font: bold 4px "Liberation Sans", sans-serif; fill: #8a6a3a; }
.combo { font: 5.5px "Liberation Sans", sans-serif; fill: #555; }

.tools { height: 20px; flex: none; border-bottom: 2px solid #d2d2d2; }
.panel {
  flex: none;
  height: 84px;
  margin-bottom: 2px;
  padding: 6px 0 0 1px;
  display: flex;
  border-bottom: 2px solid #c8c8c8;
  width: 770px;
}
.col { display: flex; flex-direction: column; flex: none; }
.c1 { width: 143px; }
.c2 { width: 143px; }
.c3 { width: 139px; }
.c4 { width: 135px; }
.c5 { width: 136px; }
.btn {
  height: 10.43px;
  flex: none;
  padding: 0;
  background: #f0f0f0;
  border: 0;
  border-top: 1px solid #fff;
  border-left: 1px solid #fff;
  border-right: 1px solid #9f9f9f;
  border-bottom: 2px solid #b0b0b0;
  font: 7px/7px "Liberation Sans", sans-serif;
  color: #555;
  text-align: center;
}
.radios { padding-left: 8px; }
.radio {
  height: 10.43px;
  display: flex;
  align-items: center;
  font-size: 7px;
  color: #666;
}
.dot {
  width: 6px;
  height: 6px;
  border-radius: 50%;
  border: 1px solid #888;
  border-right-color: #ddd;
  border-bottom-color: #ddd;
  background: #fff;
  margin-right: 6px;
}
.dot.on { background: radial-gradient(#333 0 1.3px, #fff 1.5px); }

/* status */
.status {
  height: 10px;
  flex: none;
  display: flex;
  align-items: stretch;
  padding-left: 3px;
  font-size: 5.5px;
  line-height: 10px;
  color: #555;
}
.msg { width: 832px; }
.cell {
  border: 1px solid #777;
  border-width: 1px 0 0 1px;
  display: flex;
  align-items: center;
  line-height: 8px;
}
.c-a { width: 50px; }
.c-b { width: 58px; padding-left: 3px; color: #444; }
.c-c { width: 57px; }
.mini { width: 3px; height: 3px; background: #0000d0; margin-right: 2px; }
```
